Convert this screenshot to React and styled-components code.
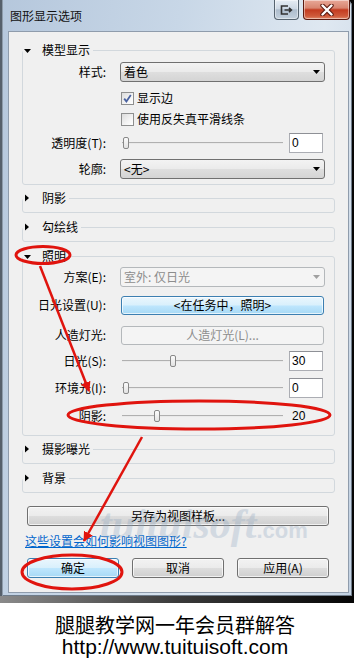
import React from 'react';
import styled, { createGlobalStyle } from 'styled-components';

const Global = createGlobalStyle`
  html, body { margin: 0; padding: 0; background: #fff; }
  body {
    font-family: "Noto Sans CJK SC", "Liberation Sans", sans-serif;
    font-size: 12px;
    color: #000;
  }
  * { box-sizing: border-box; }
`;

const Page = styled.div`
  position: relative;
  width: 354px;
  height: 668px;
  overflow: hidden;
  background: #fff;
`;

const Desktop = styled.div`
  height: 603px;
  background: linear-gradient(to right, #8a8a8a 0%, #3a3a3a 50%, #050505 100%);
`;

const Window = styled.div`
  width: 352px;
  height: 596px;
  display: flex;
  flex-direction: column;
  padding: 0 3px 3px 8px;
  background: linear-gradient(100deg, #b5c7dc 0%, #c8d7e7 40%, #dfe8f1 72%, #c2d1e2 100%);
  box-shadow: inset 2px 0 0 #56606b, inset 3px 0 0 #8e9cab, inset -1px 0 0 #6f7c8a, inset 0 -1px 0 #6f7c8a;
  border-top-right-radius: 6px;
`;

const TitleBar = styled.div`
  height: 31px;
  margin: 0 -3px 0 -8px;
  padding: 0 2px 0 10px;
  display: flex;
  align-items: flex-start;
  justify-content: space-between;
`;

const Title = styled.div`
  line-height: 31px;
  font-size: 12px;
  color: #111;
`;

const Caps = styled.div`
  display: flex;
  gap: 4px;
`;

const CapButton = styled.div`
  height: 20px;
  width: ${p => p.$w}px;
  display: flex;
  align-items: center;
  justify-content: center;
  border: 1px solid ${p => (p.$close ? '#5b1a10' : '#56636f')};
  border-top: none;
  border-radius: 0 0 4px 4px;
  background: ${p =>
    p.$close
      ? 'linear-gradient(180deg, #e8a898 0%, #d88570 42%, #c33b20 52%, #cf5a3b 85%, #e08a6c 100%)'
      : 'linear-gradient(180deg, #e6edf4 0%, #cdd8e4 45%, #aebdcd 52%, #c3d0dd 100%)'};
  box-shadow: inset 0 0 0 1px rgba(255, 255, 255, 0.45);
`;

const Client = styled.div`
  height: 562px;
  background: #f0f0f0;
  border: 1px solid #8f9cac;
  display: flex;
  flex-direction: column;
  padding: 10px 13px 0 13px;
  position: relative;
`;

const Group = styled.fieldset`
  margin: ${p => p.$mt}px 0 0 0;
  padding: 0 0 ${p => p.$pb}px 0;
  border: 1px solid #d2d8dd;
  border-radius: 3px;
  min-width: 0;
`;

const Legend = styled.legend`
  padding: 0 3px 0 0;
  margin: 0;
  height: 16px;
  line-height: 16px;
  display: flex;
  align-items: center;
`;

const LegendText = styled.span`
  margin-left: 11px;
  font-size: 12px;
  color: #000;
`;

const Row = styled.div`
  display: grid;
  grid-template-columns: 84px 205px;
  column-gap: 13px;
  align-items: center;
  height: ${p => p.$h || 20}px;
  margin-top: ${p => p.$mt}px;
`;

const Label = styled.div`
  text-align: right;
  white-space: nowrap;
  line-height: 20px;
  padding-right: 1px;
`;

const Combo = styled.div`
  height: 20px;
  border: 1px solid ${p => (p.$disabled ? '#b4b8bb' : '#707070')};
  border-radius: 3px;
  background: ${p =>
    p.$disabled
      ? '#f4f4f4'
      : 'linear-gradient(180deg, #f3f3f3 0%, #ebebeb 48%, #dedede 52%, #d4d4d4 100%)'};
  color: ${p => (p.$disabled ? '#8d8d8d' : '#000')};
  display: flex;
  align-items: center;
  justify-content: space-between;
  padding: 0 4px 0 3px;
  line-height: 18px;
`;

const PushButton = styled.div`
  height: ${p => p.$h || 20}px;
  border: 1px solid ${p => (p.$blue ? '#3c7fb1' : p.$disabled ? '#b4b8bb' : '#707070')};
  border-radius: 3px;
  background: ${p =>
    p.$blue
      ? 'linear-gradient(180deg, #eaf6fd 0%, #d9f0fc 48%, #bee6fd 52%, #a7d9f5 100%)'
      : p.$disabled
      ? '#f4f4f4'
      : 'linear-gradient(180deg, #f2f2f2 0%, #ebebeb 48%, #dddddd 52%, #cfcfcf 100%)'};
  box-shadow: ${p => (p.$disabled ? 'none' : 'inset 0 0 0 1px rgba(255,255,255,0.7)')};
  color: ${p => (p.$disabled ? '#8d8d8d' : '#000')};
  display: flex;
  align-items: center;
  justify-content: center;
  line-height: 16px;
  white-space: nowrap;
  margin: ${p => p.$m || '0'};
`;

const CheckLine = styled.div`
  display: flex;
  align-items: center;
  gap: 3px;
  line-height: 20px;
`;

const CheckBox = styled.span`
  width: 13px;
  height: 13px;
  border: 1px solid #8e8f8f;
  background: linear-gradient(135deg, #dcdcdc 0%, #f4f4f4 60%, #ffffff 100%);
  display: inline-flex;
  align-items: center;
  justify-content: center;
  margin-left: 1px;
`;

const SliderLine = styled.div`
  display: flex;
  align-items: center;
  gap: 4px;
`;

const SliderArea = styled.div`
  position: relative;
  width: 165px;
  height: 20px;
  display: flex;
  align-items: center;
`;

const Track = styled.div`
  flex: 1;
  margin: 0 2px;
  height: 2px;
  border-top: 1px solid #b0b0b0;
  border-bottom: 1px solid #e9e9e9;
`;

const Thumb = styled.div`
  position: absolute;
  top: 4px;
  width: 6px;
  height: 12px;
  border: 1px solid #888;
  border-radius: 2px;
  background: linear-gradient(180deg, #fbfbfb 0%, #e2e2e2 100%);
`;

const TextBox = styled.div`
  width: 34px;
  height: 20px;
  border: 1px solid ${p => (p.$bare ? 'transparent' : '#abadb3')};
  border-top-color: ${p => (p.$bare ? 'transparent' : '#8e9096')};
  background: ${p => (p.$bare ? 'transparent' : '#fff')};
  padding-left: 2px;
  line-height: 18px;
  font-family: "Liberation Sans", sans-serif;
  font-size: 12px;
`;

const HelpLink = styled.a`
  margin: 8px 0 0 3px;
  line-height: 14px;
  color: #0066cc;
  text-decoration: underline;
  font-size: 12px;
  align-self: flex-start;
`;

const ButtonRow = styled.div`
  display: grid;
  grid-template-columns: repeat(3, 92px);
  column-gap: 13px;
  margin: 10px 0 0 5px;
`;

const Caption = styled.div`
  padding: 11px 4px 0 0;
  text-align: center;
  color: #000;
`;

const CaptionCn = styled.div`
  font-family: "Noto Sans CJK SC", sans-serif;
  font-size: 20px;
  line-height: 22px;
`;

const CaptionUrl = styled.div`
  font-family: "Liberation Sans", Arial, sans-serif;
  font-size: 21px;
  line-height: 21px;
`;

const Watermark = styled.div`
  position: absolute;
  left: 100px;
  top: 500px;
  display: flex;
  align-items: baseline;
  color: #8ea6c0;
  opacity: 0.3;
  pointer-events: none;
`;

const WmBig = styled.span`
  font-family: "Liberation Serif", serif;
  font-style: italic;
  font-weight: bold;
  font-size: 42px;
`;

const WmSmall = styled.span`
  font-family: "Liberation Sans", sans-serif;
  font-weight: bold;
  font-size: 22px;
`;

const Overlay = styled.svg`
  position: absolute;
  left: 0;
  top: 0;
  pointer-events: none;
`;

function Tri({ open }) {
  return (
    <svg width="8" height="16" viewBox="0 0 8 16">
      {open ? <polygon points="1,7 8,7 4.5,11" fill="#000" /> : <polygon points="2,4.5 2,11.5 6,8" fill="#000" />}
    </svg>
  );
}

function Arrow({ color }) {
  return (
    <svg width="7" height="4" viewBox="0 0 7 4">
      <polygon points="0,0 7,0 3.5,4" fill={color} />
    </svg>
  );
}

function Slider({ value }) {
  return (
    <SliderArea>
      <Track />
      <Thumb style={{ left: `${3 + value * 1.55}px` }} />
    </SliderArea>
  );
}

function Section({ title, open, mt, pb, children }) {
  return (
    <Group $mt={mt} $pb={pb}>
      <Legend>
        <Tri open={open} />
        <LegendText>{title}</LegendText>
      </Legend>
      {children}
    </Group>
  );
}

function Check({ checked, children }) {
  return (
    <CheckLine>
      <CheckBox>
        {checked && (
          <svg width="9" height="9" viewBox="0 0 9 9">
            <path d="M1.2 4.6 L3.4 7.4 L7.8 1" fill="none" stroke="#4a62a0" strokeWidth="1.8" />
          </svg>
        )}
      </CheckBox>
      <span>{children}</span>
    </CheckLine>
  );
}

export default function App() {
  const red = '#e0140e';
  return (
    <Page>
      <Global />
      <Desktop>
        <Window>
          <TitleBar>
            <Title>图形显示选项</Title>
            <Caps>
              <CapButton $w={25}>
                <svg width="13" height="10" viewBox="0 0 13 10">
                  <path d="M8 1 H1.5 V9 H8" fill="none" stroke="#333" strokeWidth="1.6" />
                  <path d="M4.5 5 H11 M9 2.8 L11.4 5 L9 7.2" fill="none" stroke="#333" strokeWidth="1.6" />
                </svg>
              </CapButton>
              <CapButton $w={47} $close>
                <svg width="14" height="12" viewBox="0 0 14 12">
                  <path d="M2.5 1.5 L11.5 10.5 M11.5 1.5 L2.5 10.5" stroke="#5a1a10" strokeWidth="4.4" strokeLinecap="round" />
                  <path d="M2.5 1.5 L11.5 10.5 M11.5 1.5 L2.5 10.5" stroke="#fff" strokeWidth="2.4" strokeLinecap="round" />
                </svg>
              </CapButton>
            </Caps>
          </TitleBar>
          <Client>
            <Section title="模型显示" open mt={0} pb={5}>
              <Row $mt={4}>
                <Label>样式:</Label>
                <Combo>
                  <span>着色</span>
                  <Arrow color="#000" />
                </Combo>
              </Row>
              <Row $mt={6}>
                <span />
                <Check checked>显示边</Check>
              </Row>
              <Row $mt={1}>
                <span />
                <Check>使用反失真平滑线条</Check>
              </Row>
              <Row $mt={4}>
                <Label>透明度(T):</Label>
                <SliderLine>
                  <Slider value={0} />
                  <TextBox>0</TextBox>
                </SliderLine>
              </Row>
              <Row $mt={6}>
                <Label>轮廓:</Label>
                <Combo>
                  <span>&lt;无&gt;</span>
                  <Arrow color="#000" />
                </Combo>
              </Row>
            </Section>

            <Section title="阴影" mt={5} pb={6} />
            <Section title="勾绘线" mt={6} pb={6} />

            <Section title="照明" open mt={6} pb={9}>
              <Row $mt={3}>
                <Label>方案(E):</Label>
                <Combo $disabled>
                  <span>室外: 仅日光</span>
                  <Arrow color="#a0a0a0" />
                </Combo>
              </Row>
              <Row $mt={8}>
                <Label>日光设置(U):</Label>
                <PushButton $blue $h={19} $m="0 1px">&lt;在任务中，照明&gt;</PushButton>
              </Row>
              <Row $mt={10}>
                <Label>人造灯光:</Label>
                <PushButton $disabled $h={19} $m="0 1px">人造灯光(L)...</PushButton>
              </Row>
              <Row $mt={6}>
                <Label>日光(S):</Label>
                <SliderLine>
                  <Slider value={30} />
                  <TextBox>30</TextBox>
                </SliderLine>
              </Row>
              <Row $mt={7}>
                <Label>环境光(I):</Label>
                <SliderLine>
                  <Slider value={0} />
                  <TextBox>0</TextBox>
                </SliderLine>
              </Row>
              <Row $mt={8}>
                <Label>阴影:</Label>
                <SliderLine>
                  <Slider value={20} />
                  <TextBox $bare>20</TextBox>
                </SliderLine>
              </Row>
            </Section>

            <Section title="摄影曝光" mt={5} pb={6} />
            <Section title="背景" mt={6} pb={6} />

            <PushButton $m="13px 6px 0 5px">另存为视图样板...</PushButton>
            <HelpLink>这些设置会如何影响视图图形?</HelpLink>
            <ButtonRow>
              <PushButton $blue>确定</PushButton>
              <PushButton>取消</PushButton>
              <PushButton>应用(A)</PushButton>
            </ButtonRow>
          </Client>
        </Window>
      </Desktop>
      <Caption>
        <CaptionCn>腿腿教学网一年会员群解答</CaptionCn>
        <CaptionUrl>http://www.tuituisoft.com</CaptionUrl>
      </Caption>

      <Watermark>
        <WmBig>tuituisoft</WmBig>
        <WmSmall>.com</WmSmall>
      </Watermark>

      <Overlay width="354" height="668" viewBox="0 0 354 668">
        <defs>
          <marker id="ah" viewBox="0 0 10 10" refX="9" refY="5" markerWidth="4" markerHeight="4" orient="auto">
            <path d="M0 0 L10 5 L0 10 Z" fill={red} />
          </marker>
        </defs>
        <ellipse cx="43" cy="255" rx="27" ry="8.5" fill="none" stroke={red} strokeWidth="3" />
        <line x1="40" y1="266" x2="89" y2="391" stroke={red} strokeWidth="2.5" markerEnd="url(#ah)" />
        <ellipse cx="199" cy="415" rx="131" ry="14" fill="none" stroke={red} strokeWidth="3" />
        <line x1="142" y1="437" x2="84" y2="541" stroke={red} strokeWidth="2.5" markerEnd="url(#ah)" />
        <ellipse cx="72" cy="572" rx="50" ry="17" fill="none" stroke={red} strokeWidth="3" />
      </Overlay>
    </Page>
  );
}
